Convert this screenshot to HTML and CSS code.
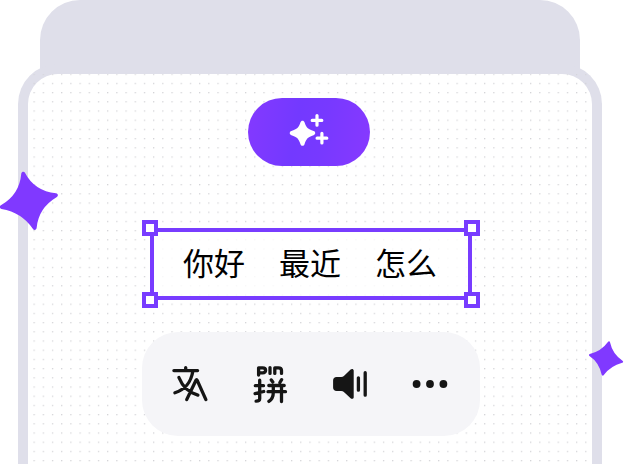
FILE: index.html
```html
<!DOCTYPE html>
<html lang="zh-CN">
<head>
<meta charset="utf-8">
<title>Pinyin</title>
<link rel="stylesheet" href="styles.css">
</head>
<body>
<main class="scene">
  <div class="back"></div>
  <section class="card">
    <svg class="dots" aria-hidden="true">
      <defs>
        <pattern id="grid" x="5.5" y="-0.4" width="9.195" height="9.2" patternUnits="userSpaceOnUse">
          <rect width="1.25" height="1.25" fill="#d2d2d6"/>
        </pattern>
      </defs>
      <rect width="100%" height="100%" fill="url(#grid)"/>
    </svg>
    <div class="magic">
      <svg width="122" height="68" viewBox="248 98 122 68">
        <path class="spark" d="M302.500 120.700c1 0 1.700.6 2 1.500 2 5.600 3.200 6.800 9.100 8.800 2.200.7 2.200 3.500 0 4.200-5.900 2-7.100 3.200-9.100 9-.6 2-3.400 2-4 0-2-5.800-3.200-7-9.100-9-2.200-.7-2.200-3.500 0-4.200 5.900-2 7.100-3.200 9.100-8.800.4-.9 1-1.500 2-1.500z"/>
        <path class="plus" d="M317 115.600v9.600M312.200 120.400h9.600M321.900 133.400v9.600M317.100 138.200h9.700"/>
      </svg>
    </div>
    <div class="selection">
      <span>你好</span><span>最近</span><span>怎么</span>
      <i class="handle tl"></i><i class="handle tr"></i><i class="handle bl"></i><i class="handle br"></i>
    </div>
    <div class="toolbar">
      <svg class="tool" viewBox="170 364 40 40">
        <path class="line" d="M185.700 367.600v2.600M173.900 370.600h23.700M192.900 371c-2.200 13-8.500 18.600-18 21.800M178.900 377.500c3.900 9.800 9.300 15.200 19 17.600M186.700 399.600l9.300-19.300q.6-1.400 1.200 0l8.700 19.300"/>
      </svg>
      <svg class="tool" viewBox="250 364 40 40">
        <path class="line" d="M258.600 375v-7.200h4q3 0 3 2.500t-3 2.500h-3.800M270 367.600v5.800M274.800 373.400v-5.600h3.500q3.200 0 3.200 2.800v2.800"/>
        <path class="line" d="M255.300 385.700h8.200M259.700 380.200v18.600q0 2.400-3.600 2.400M255.100 393.600l8.600-2.100M271.300 379.900l1.500 2M281.600 379.700l-1.700 2.800M268.800 385.500h15.400M268 391.700h17.500M273.300 386v6.500q0 6-4.400 8.900M281.500 386v15.600"/>
      </svg>
      <svg class="tool" viewBox="330 364 40 40">
        <path class="solid" d="M333.100 380.500c0-2.200 1.300-3.500 3.500-3.500h4.600q1.600 0 2.700-1l6.700-6.500c1-1 3.100-.7 3.100 1v26.800c0 1.700-2.100 2-3.100 1l-6.700-6.300q-1.100-1-2.700-1h-4.600c-2.200 0-3.500-1.300-3.500-3.500z"/>
        <path class="wave" d="M358.400 377.800v12.400M365.200 372.700v22.500"/>
      </svg>
      <svg class="tool" viewBox="410 364 40 40">
        <circle class="solid" cx="416.600" cy="384" r="3.900"/><circle class="solid" cx="430" cy="384" r="3.900"/><circle class="solid" cx="443.400" cy="384" r="3.900"/>
      </svg>
    </div>
  </section>
  <svg class="star large" viewBox="0 0 58 60"><path d="M21.300 2.500C21.700.5 24.300.3 25.100 2Q34.500 20 56 22.300C58.300 22.700 58.500 25.300 56.500 26.200Q38.500 37 36.700 56.500C36.600 59 34 59.800 32.800 57.700Q22 41.500 1.500 37.900C-.5 37.600-.7 34.800 1.300 34Q19.500 23.500 21.300 2.500z"/></svg>
  <svg class="star small" viewBox="588 341 36 35"><path d="M607.900 342C608.500 340.900 609.900 341 610 342.300Q612.500 354 622.500 360.700C623.500 361.200 623.300 362.600 622.200 362.800Q610.500 366 603.800 375C603.300 376 601.800 375.800 601.600 374.600Q599 362.500 589.500 356.100C588.500 355.600 588.700 354.200 589.800 354Q601.500 351 607.900 342z"/></svg>
</main>
</body>
</html>
```
FILE: styles.css
```css
* { box-sizing: border-box; }

body {
  margin: 0;
  background: #fff;
}

.scene {
  position: relative;
  width: 624px;
  height: 464px;
  overflow: hidden;
}

.back {
  width: 540px;
  height: 110px;
  margin-left: 40px;
  border-radius: 40px 40px 0 0;
  background: #dfdfea;
}

.card {
  position: relative;
  display: flex;
  flex-direction: column;
  align-items: center;
  width: 584px;
  height: 420px;
  margin: -46px 0 0 18px;
  padding-top: 24px;
  border: 10px solid #dfdfea;
  border-bottom: 0;
  border-radius: 40px 40px 0 0;
  background: #fff;
}

.dots {
  position: absolute;
  inset: 0;
  width: 100%;
  height: 100%;
}

.magic {
  position: relative;
  width: 122px;
  height: 68px;
  margin-right: 2px;
  border-radius: 34px;
  background: linear-gradient(100deg, #8439ff 0%, #7339ff 40%, #7739ff 60%, #8739ff 100%);
}

.magic svg { display: block; }
.spark { fill: #fff; }
.plus { fill: none; stroke: #fff; stroke-width: 3.2; stroke-linecap: round; }

.selection {
  position: relative;
  display: flex;
  align-items: center;
  gap: 34px;
  width: 322px;
  height: 72px;
  margin: 62px 0 0 2px;
  padding: 0 0 4px 29px;
  border: 4px solid #783cff;
  background: rgba(255, 255, 255, .8);
  color: #000;
  font: 31px/60px "Noto Sans CJK SC", sans-serif;
}

.handle {
  position: absolute;
  width: 16px;
  height: 16px;
  border: 4px solid #783cff;
  background: #fff;
}

.tl { left: -12px; top: -12px; }
.tr { right: -12px; top: -12px; }
.bl { left: -12px; bottom: -12px; }
.br { right: -12px; bottom: -12px; }

.toolbar {
  position: relative;
  display: flex;
  align-items: center;
  justify-content: center;
  gap: 40px;
  width: 338px;
  height: 104px;
  margin: 32px 0 0 2px;
  padding-right: 2px;
  border-radius: 36px;
  background: #f5f5f8;
}

.tool { width: 40px; height: 40px; }
.solid { fill: #151515; }
.line {
  fill: none;
  stroke: #151515;
  stroke-width: 3.3;
  stroke-linecap: round;
  stroke-linejoin: round;
}
.wave { fill: none; stroke: #151515; stroke-width: 3.3; stroke-linecap: round; }

.star { position: absolute; fill: #8039ff; }
.large { left: 0; top: 171px; width: 58px; height: 60px; }
.small { left: 588px; top: 341px; width: 36px; height: 35px; }
```
